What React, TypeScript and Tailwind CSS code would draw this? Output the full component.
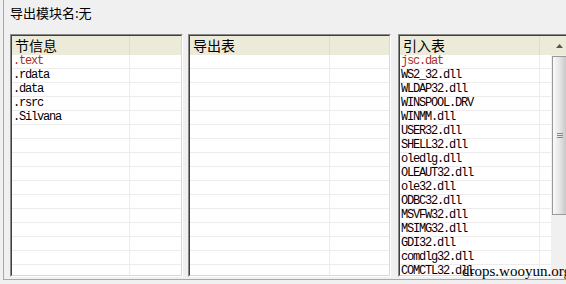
import React from "react";

const sections = [".text", ".rdata", ".data", ".rsrc", ".Silvana"];
const imports = [
  "jsc.dat",
  "WS2_32.dll",
  "WLDAP32.dll",
  "WINSPOOL.DRV",
  "WINMM.dll",
  "USER32.dll",
  "SHELL32.dll",
  "oledlg.dll",
  "OLEAUT32.dll",
  "ole32.dll",
  "ODBC32.dll",
  "MSVFW32.dll",
  "MSIMG32.dll",
  "GDI32.dll",
  "comdlg32.dll",
  "COMCTL32.dll",
];

const mono = { fontFamily: '"Liberation Mono", "DejaVu Sans Mono", monospace' };
const cjk = { fontFamily: '"Noto Sans CJK SC", "Noto Sans", sans-serif' };

function Panel({
  title,
  items,
  width,
  colWidth,
  scroll,
}: {
  title: string;
  items: string[];
  width: number;
  colWidth: number;
  scroll?: boolean;
}) {
  const rows = Array.from({ length: 17 }, (_, i) => items[i] ?? "");
  return (
    <div
      className="h-[243px] shrink-0 border-t border-l border-r border-b border-t-[#8a8a8a] border-l-[#8a8a8a] border-r-[#ffffff] border-b-[#ffffff]"
      style={{ width }}
    >
      <div className="h-full flex border-t border-l border-r border-b border-t-[#404040] border-l-[#404040] border-r-[#d8d8d8] border-b-[#d8d8d8] bg-white overflow-hidden">
        <div className="flex-1 flex flex-col overflow-hidden">
          <div className="h-[19px] shrink-0 flex bg-[#ecebd9]">
            <div
              className="shrink-0 h-full pl-[3px] text-[14px] leading-[19px] text-black border-r border-[#dfdecb]"
              style={{ ...cjk, width: colWidth }}
            >
              {title}
            </div>
            <div className="flex-1" />
          </div>
          {rows.map((r, i) => (
            <div key={i} className="h-[14px] shrink-0 flex border-b border-[#ececec]">
              <div
                className={
                  "shrink-0 h-full pl-[1px] text-[12px] leading-[13px] tracking-[-1.2px] whitespace-nowrap border-r border-[#ececec] " +
                  (i === 0 ? "text-[#a8302a]" : "text-black")
                }
                style={{ ...mono, width: colWidth }}
              >
                {r}
              </div>
              <div className="flex-1" />
            </div>
          ))}
        </div>
        {scroll && (
          <div className="w-[17px] shrink-0 flex flex-col bg-[#f0f0f0]">
            <div className="h-[19px] shrink-0 flex items-center justify-center bg-[#ecebd9]">
              <svg width="7" height="4" viewBox="0 0 7 4">
                <path d="M0 4 L3.5 0 L7 4 Z" fill="#555" />
              </svg>
            </div>
            <div className="h-[159px] shrink-0 mt-[1px] mx-[1px] border border-[#9a9a9a] bg-gradient-to-r from-[#fafafa] via-[#e6e6e6] to-[#c8c8c8] flex items-center justify-center">
              <div className="flex flex-col gap-[1px]">
                <div className="w-[6px] h-[1px] bg-[#888]" />
                <div className="w-[6px] h-[1px] bg-[#888]" />
                <div className="w-[6px] h-[1px] bg-[#888]" />
              </div>
            </div>
          </div>
        )}
      </div>
    </div>
  );
}

export default function App() {
  return (
    <div className="relative w-[566px] h-[284px] overflow-hidden bg-[#f0f0f0]">
      <div className="ml-[3px] h-[280px] border-l border-b border-[#a8a8a8] w-[600px]">
        <div className="h-[34px] pl-[6px] pt-[4px] text-[13px] leading-[18px] text-black" style={cjk}>
          导出模块名:无
        </div>
        <div className="flex pl-[6px]">
          <Panel title="节信息" items={sections} width={173} colWidth={118} />
          <div className="w-[5px] shrink-0" />
          <Panel title="导出表" items={[]} width={203} colWidth={140} />
          <div className="w-[7px] shrink-0" />
          <Panel title="引入表" items={imports} width={172} colWidth={140} scroll />
        </div>
      </div>
      <div
        className="absolute left-[462px] top-[262px] text-[15px] leading-[18px] text-black"
        style={{ fontFamily: '"Liberation Serif", "DejaVu Serif", serif' }}
      >
        drops.wooyun.org
      </div>
    </div>
  );
}
